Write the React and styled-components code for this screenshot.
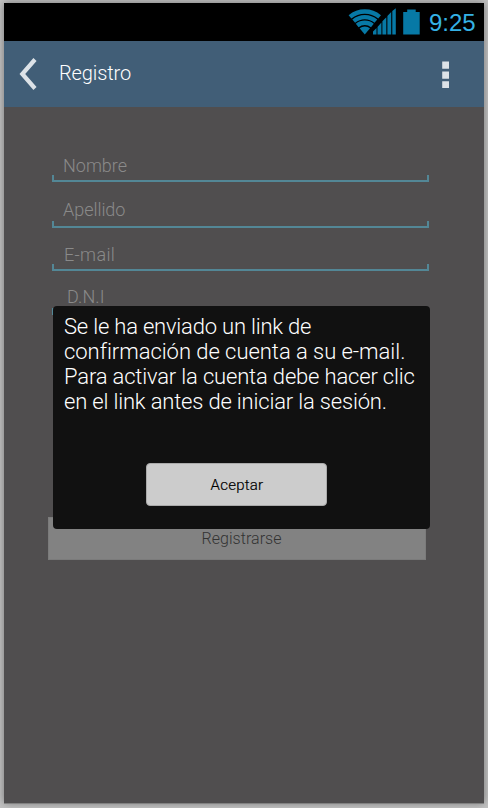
import React from "react";
import styled, { createGlobalStyle } from "styled-components";

const GlobalStyle = createGlobalStyle`
  *, *::after { box-sizing: border-box; }
  body {
    margin: 0;
    background: #b5b5b5;
    font-family: Roboto, "Liberation Sans", sans-serif;
    font-weight: 300;
  }
`;

const Stage = styled.div`
  width: 488px;
  height: 808px;
  padding: 3px 4px 5px;
  overflow: hidden;
  background: #c2c2c2;
`;

const Phone = styled.main`
  position: relative;
  width: 480px;
  height: 800px;
  display: flex;
  flex-direction: column;
  background: #504e4f;
  box-shadow: 0 1px 0 #828282, 0 0 8px rgba(0, 0, 0, 0.4);
`;

const StatusBar = styled.header`
  height: 38px;
  flex: none;
  display: flex;
  align-items: flex-start;
  justify-content: flex-end;
  padding: 5px 9px 0 0;
  background: #000;
`;

const StatusIcons = styled.svg`
  width: 74px;
  height: 28px;
  margin-right: 7px;
`;

const Clock = styled.time`
  width: 46px;
  font: 400 24px/30px "Liberation Sans", sans-serif;
  color: #35b1e5;
  white-space: nowrap;
`;

const AppBar = styled.nav`
  height: 66px;
  flex: none;
  display: flex;
  align-items: center;
  padding: 0 34px 0 15px;
  background: #415e77;
`;

const IconButton = styled.button`
  display: flex;
  padding: 0;
  border: 0;
  background: none;
`;

const Title = styled.h1`
  flex: 1;
  margin: 0 0 2px 20px;
  font-size: 20px;
  line-height: 24px;
  font-weight: 300;
  letter-spacing: -0.1px;
  color: #fff;
`;

const Form = styled.form`
  display: flex;
  flex-direction: column;
  padding: 45px 0 0 48px;
`;

const Field = styled.label`
  height: ${(p) => p.$height}px;
  width: 377px;
  display: flex;
  flex-direction: column;
  justify-content: space-between;
  padding-top: ${(p) => p.$top}px;
  font-size: 18px;
  line-height: 22px;
  letter-spacing: ${(p) => p.$tracking}px;
  color: #8a8a8a;

  span { height: 0; padding-left: ${(p) => p.$indent}px; white-space: nowrap; }
  &::after {
    content: "";
    height: 7px;
    border: solid #538796;
    border-width: 0 2px 2px;
  }
`;

const SubmitButton = styled.button`
  width: 378px;
  height: 43px;
  margin: 202px 0 0 -4px;
  padding: 0 0 0 9px;
  border: 1px solid #7b7b7b;
  background: #828282;
  color: #333;
  font: 300 16px/20px Roboto, sans-serif;
  letter-spacing: 0.05px;
`;

const Dialog = styled.section`
  position: absolute;
  left: 49px;
  top: 303px;
  width: 377px;
  height: 223px;
  display: flex;
  flex-direction: column;
  align-items: center;
  padding: 8px 0 23px;
  border-radius: 4px;
  background: #111;
`;

const Message = styled.p`
  align-self: flex-start;
  flex: 1;
  margin: 0 0 0 11px;
  font-size: 22px;
  line-height: 25px;
  color: #fff;
  white-space: nowrap;
`;

const MessageLine = styled.span`
  display: block;
  letter-spacing: ${(p) => p.$tracking}px;
`;

const AcceptButton = styled.button`
  width: 181px;
  height: 43px;
  margin-right: 11px;
  padding: 0 0 0 2px;
  border: 1px solid #aaa;
  border-radius: 4px;
  background: #ccc;
  color: #000;
  font: 300 15px/20px Roboto, sans-serif;
  letter-spacing: 0.25px;
  -webkit-text-stroke: 0.2px #000;
`;

const fields = [
  { label: "Nombre", height: 30, top: 3, indent: 11, tracking: 0 },
  { label: "Apellido", height: 46, top: 17, indent: 11, tracking: -0.05 },
  { label: "E-mail", height: 43, top: 16, indent: 12, tracking: 0.35 },
  { label: "D.N.I", height: 44, top: 15, indent: 15, tracking: 0.1 },
];

const lines = [
  { text: "Se le ha enviado un link de", tracking: -0.2 },
  { text: "confirmación de cuenta a su e-mail.", tracking: -0.04 },
  { text: "Para activar la cuenta debe hacer clic", tracking: -0.17 },
  { text: "en el link antes de iniciar la sesión.", tracking: -0.18 },
];

export default function App() {
  return (
    <>
      <GlobalStyle />
      <Stage>
        <Phone>
          <StatusBar>
            <StatusIcons viewBox="348 8 74 28" fill="#0779a6">
              <g fill="none" stroke="#0779a6" strokeWidth="4.3">
                <path d="M350 16.9A23 23 0 0 1 379.6 16.9" />
                <path d="M353.7 21.2A17.3 17.3 0 0 1 375.9 21.2" />
                <path d="M357.2 25.5A11.8 11.8 0 0 1 372.4 25.5" />
              </g>
              <path d="M359.6 28.3A8.2 8.2 0 0 1 370 28.3L364.8 34.5Z" />
              <path d="M373 34.5v-3l3.5-3.5v6.5zM377.5 34.5v-7.6l3.9-4.5v12.1zM382.4 34.5V21.3l3.9-4.1v17.3zM387.4 34.5V16l3.8-4v22.5zM392.3 34.5V11l3.5-2.8v26.3z" />
              <path d="M403.2 34.5V12h4V9.5h8.5V12h4v22.5z" />
            </StatusIcons>
            <Clock>9:25</Clock>
          </StatusBar>
          <AppBar>
            <IconButton aria-label="Volver">
              <svg width="20" height="34" viewBox="19 57 20 34" fill="none" stroke="#dce2e7" strokeWidth="4.2">
                <path d="M35 59.5L22.3 74L35 88.5" />
              </svg>
            </IconButton>
            <Title>Registro</Title>
            <IconButton aria-label="Más opciones">
              <svg width="8" height="28" viewBox="0 0 8 28" fill="#dce2e7">
                <path d="M.2 1.4H7V8.8H.2zM.2 11.4H7V18.8H.2zM.2 21.2H7V28H.2z" />
              </svg>
            </IconButton>
          </AppBar>
          <Form>
            {fields.map((f) => (
              <Field key={f.label} $height={f.height} $top={f.top} $indent={f.indent} $tracking={f.tracking}>
                <span>{f.label}</span>
              </Field>
            ))}
            <SubmitButton type="button">Registrarse</SubmitButton>
          </Form>
          <Dialog role="dialog">
            <Message>
              {lines.map((l) => (
                <MessageLine key={l.text} $tracking={l.tracking}>{l.text}</MessageLine>
              ))}
            </Message>
            <AcceptButton>Aceptar</AcceptButton>
          </Dialog>
        </Phone>
      </Stage>
    </>
  );
}
